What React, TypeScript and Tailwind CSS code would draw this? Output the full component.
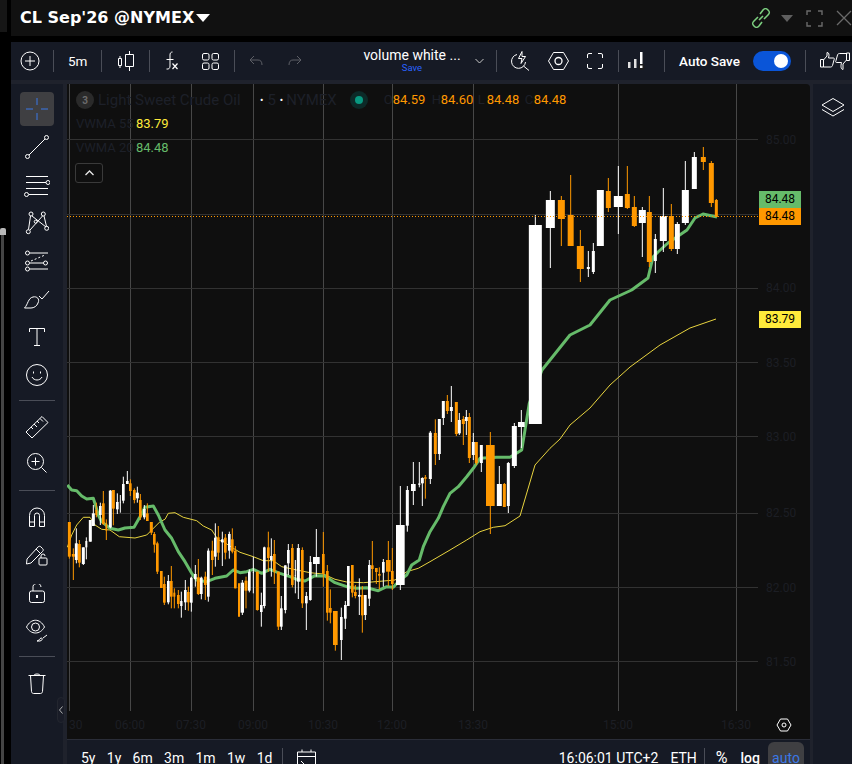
import React from "react";

const O = "#ff9800";
const W = "#ffffff";

// candle rows: x, wick top, wick bottom, body top, body bottom, white?, body width (all in crop units, 3x)
type Row = [number, number, number, number, number, number, number];

const crop1: Row[] = [
  [28,186,296,186,290,0,9],[40,265,360,282,290,0,9],[49,205,310,250,300,1,9],[58,240,322,252,308,0,9],[70,262,315,262,312,1,9],
  [79,232,298,243,262,1,6],[91,180,245,180,245,1,9],[100,135,198,160,198,1,9],[109,128,172,150,165,0,6],[121,128,195,138,165,1,8],
  [130,93,195,130,192,0,8],[139,178,240,190,212,0,5],[151,90,205,92,202,1,9],[160,90,196,90,146,0,9],[172,100,162,126,148,1,8],
  [181,105,158,125,128,1,3],[190,50,130,72,122,1,8],[202,33,72,63,72,1,8],[211,58,108,70,93,0,8],[223,85,130,90,120,0,8],
  [232,80,128,98,115,1,9],[241,102,180,120,172,0,8],[253,135,178,147,172,1,8],[262,130,183,160,183,0,8],[274,186,225,186,218,0,9],
  [283,216,278,222,254,0,8],[292,245,342,250,335,0,8],[304,333,384,333,384,0,8],[313,350,435,372,428,0,8],[325,345,433,363,427,1,8],
  [334,318,445,363,410,0,8],[343,385,445,398,410,0,6],[355,390,445,405,432,0,8],[364,395,473,423,438,1,7],[376,360,450,390,427,1,8],
  [385,380,452,396,427,0,8],[394,350,455,353,428,1,8],[406,315,380,342,357,1,8],[415,297,405,352,402,0,9],[424,350,418,353,402,1,8],
  [436,335,420,350,375,0,8],[445,265,425,272,410,1,8],[457,242,345,272,300,0,8],[466,190,320,233,290,1,8],[475,198,300,232,278,0,8],
  [487,215,318,238,247,1,8],[496,222,298,233,278,0,8],[508,215,296,222,272,1,8],[517,205,280,238,275,0,8],[526,258,385,272,385,0,8],
  [537,370,470,370,470,0,6],
];

const crop2: Row[] = [
  [7,360,465,368,458,1,10],[18,350,445,362,392,0,9],[28,328,397,335,392,1,8],[40,290,400,336,338,1,3],[52,335,452,335,450,0,9],
  [64,398,500,435,456,1,8],[73,260,445,262,438,1,8],[85,215,335,262,294,0,8],[94,235,350,288,300,1,8],[103,240,372,282,335,0,8],
  [115,335,510,335,500,0,9],[124,408,510,445,500,1,8],[136,316,460,316,450,1,8],[145,252,345,270,310,1,8],[157,252,382,264,375,0,8],
  [166,300,400,345,347,1,3],[175,252,417,264,365,1,9],[187,262,444,270,430,0,8],[199,396,510,408,430,1,8],[211,288,422,306,420,1,8],
  [229,207,350,291,312,1,20],[250,216,380,282,342,0,8],[262,315,482,333,458,0,8],[271,388,490,444,458,0,8],[286,453,572,453,555,0,14],
  [304,443,600,471,540,1,8],[316,423,507,435,476,1,8],[325,318,438,318,438,1,8],[337,315,412,315,398,0,8],[346,375,415,396,408,0,8],
  [358,355,465,405,410,1,8],[367,378,518,405,466,0,8],[376,405,480,405,465,1,8],[388,300,438,315,416,1,8],[397,243,360,316,327,0,8],
  [409,336,372,324,336,0,8],[418,322,388,342,347,0,8],[430,297,380,306,338,1,8],[445,243,378,300,335,0,14],[457,264,390,333,372,0,8],
  [481,78,390,195,375,1,26],
];

const crop3: Row[] = [
  [52,318,455,330,437,1,9],[70,246,375,312,333,1,14],[88,246,322,310,315,1,6],[97,292,378,294,310,1,9],[106,285,356,292,296,0,9],
  [121,153,312,158,297,1,9],[136,118,255,159,222,0,9],[148,117,240,117,222,1,9],[160,63,135,63,114,1,9],[172,45,102,63,93,0,9],
  [184,18,126,81,93,1,9],[199,66,168,66,162,0,9],[208,99,165,120,160,1,9],[220,108,195,117,132,0,9],[229,90,165,111,123,1,9],
  [238,99,249,111,234,0,9],[250,159,240,186,225,1,9],[259,186,255,186,249,0,9],[274,195,276,195,249,1,9],[301,156,462,195,378,0,26],
  [328,258,378,312,378,1,15],[343,309,381,312,381,0,9],[355,246,399,249,378,1,9],[373,129,264,138,258,1,15],[394,90,204,126,141,1,20],
];

const crop4: Row[] = [
  [46,225,852,255,852,1,39],[91,153,384,180,264,1,27],[124,168,318,180,237,0,21],[152,105,318,225,318,0,18],[181,270,426,318,387,0,21],
  [205,333,411,381,387,1,9],[220,309,402,333,396,1,9],[241,150,318,150,318,1,21],[265,114,216,153,204,0,15],[295,78,282,168,201,1,27],
  [322,78,207,162,204,0,15],[343,168,261,201,258,0,15],[367,201,351,210,249,1,21],[388,168,381,216,366,0,15],[406,282,399,297,363,1,9],
  [430,144,336,228,303,1,21],[454,192,333,228,327,0,15],[472,246,342,252,327,1,15],[496,63,255,150,249,1,21],[523,36,147,51,147,1,15],
  [550,21,90,51,66,0,15],[574,63,201,69,189,0,15],[589,177,231,180,231,0,9],
];

const sets: { ox: number; oy: number; rows: Row[] }[] = [
  { ox: 60, oy: 460, rows: crop1 },
  { ox: 240, oy: 460, rows: crop2 },
  { ox: 390, oy: 380, rows: crop3 },
  { ox: 520, oy: 140, rows: crop4 },
];

const greenLine =
  "67.3,485 71.7,490 76.7,490.7 81.7,496 86.7,499 93.3,498.3 96,506.7 98.3,515 101.7,521.7 110,528.3 118.3,530 125,528 134,527.3 140,516.7 145,507.3 153.3,506 158.3,515 165,530 171.7,538.3 178.3,551.7 185,561.7 191.7,573.3 196.7,580 206.7,581.7 215,578.3 226.7,576 233.3,570 240,572.7 246.7,571.7 253.3,569.3 261.7,573.3 270,569.3 280,573.3 290,576.7 296.7,579.3 305,581 315,575.7 325,576 335,582.7 346.7,586.7 356.7,588.3 366.7,587.7 378.3,590.7 386.7,586.7 393.3,587.3 400,580 406.7,575 411.7,565 419.3,560 423.3,546.7 430,531.7 438.3,518.3 443.3,506.7 450,493.3 458.3,486.7 466.7,476.7 473.3,468.3 480,458.3 496.7,457.3 510,457.3 521.7,450 525,430 529.3,403.3 542,370 570,335 590,325 610,300 631.7,290 648,278 653,257 658,252 668,243 687,230 695,218 703,214 717,217";

const yellowLine =
  "67.3,547.3 71.7,535 76.7,525 83.3,517.3 90,517.3 95,525 101.7,529.3 110,530 119.3,536.7 135,538 146.7,535 151.7,530 160,521.7 165,519.3 168.3,513.3 175,512.7 183.3,517.3 196.7,520.7 203.3,526 211.7,530 218.3,540 223.3,541.7 233.3,548.3 240,552.3 253.3,556.7 263.3,560.7 273.3,560.7 281.7,566.7 296.7,570 310,572.7 323.3,574 335,579.3 346.7,582 363.3,582.7 380,581.3 395,580 406.7,571.7 418.3,568.3 430,561.7 450,550 466.7,540 480,531.7 493.3,527.3 505,525.7 520,516 535,465 550,448.3 560,439 570,425 590,408 610,385 630,367 660,345 690,328 716,319";

const vLines = [69, 130, 191, 253, 323, 392, 473, 618, 736];
const hLines = [139, 214, 288, 362, 436, 513, 587, 661];
const priceLabels: [string, number][] = [["85.00", 144], ["84.00", 292], ["83.50", 367], ["83.00", 441], ["82.50", 517], ["82.00", 592], ["81.50", 666]];
const timeLabels: [string, number][] = [["06:00", 130], ["07:30", 191], ["09:00", 253], ["10:30", 323], ["12:00", 392], ["13:30", 473], ["15:00", 618], ["16:30", 736]];

const Chart = () => (
  <svg viewBox="67 84 743 655" className="absolute inset-0 w-full h-full">
    {vLines.map((x) => <line key={x} x1={x + 0.5} x2={x + 0.5} y1={84} y2={711} stroke="#474747" />)}
    {hLines.map((y) => <line key={y} x1={67} x2={758} y1={y + 0.5} y2={y + 0.5} stroke="#323232" />)}
    {priceLabels.map(([t, y]) => <text key={t} x={766} y={y} fontSize="12" fill="#1c1e24">{t}</text>)}
    <text x={69} y={729} fontSize="12" fill="#1c1e24">30</text>
    {timeLabels.map(([t, x]) => <text key={t} x={x} y={729} fontSize="12" textAnchor="middle" fill="#1c1e24">{t}</text>)}
    <polyline points={yellowLine} fill="none" stroke="#e8d43f" strokeWidth="1" />
    <polyline points={greenLine} fill="none" stroke="#66bb6a" strokeWidth="3" strokeLinejoin="round" />
    {sets.map((s) =>
      s.rows.map((r, i) => {
        const x = s.ox + r[0] / 3;
        const bw = r[6] / 3;
        const bottom = s.ox === 520 && i === 0 ? 424 : s.oy + r[4] / 3;
        const color = r[5] ? W : O;
        return (
          <g key={s.ox + "-" + i} fill={color}>
            <rect x={x - 0.5} width={1} y={s.oy + r[1] / 3} height={Math.max(0, (s.ox === 520 && i === 0 ? 424 : s.oy + r[2] / 3) - (s.oy + r[1] / 3))} />
            <rect x={x - bw / 2} width={bw} y={s.oy + r[3] / 3} height={Math.max(1, bottom - (s.oy + r[3] / 3))} />
          </g>
        );
      })
    )}
    <line x1={67} x2={758} y1={216.5} y2={216.5} stroke={O} strokeWidth="1" strokeDasharray="1 2" />
  </svg>
);

const Divider = ({ ml }: { ml: string }) => <div className={`w-px h-[22px] bg-[#4a4d57] shrink-0 ${ml}`} />;

const Stroke = ({ w, h, children, color = "#fff" }: { w: number; h: number; children: React.ReactNode; color?: string }) => (
  <svg width={w} height={h} viewBox={`0 0 ${w} ${h}`} fill="none" stroke={color} strokeWidth="1" className="shrink-0">
    {children}
  </svg>
);

const TopToolbar = () => (
  <div className="h-[38px] bg-[#161a25] flex items-center text-white shrink-0 overflow-hidden">
    <div className="ml-[9px]">
      <Stroke w={20} h={20}><circle cx="10" cy="10" r="9" /><path d="M10 5v10M5 10h10" /></Stroke>
    </div>
    <Divider ml="ml-[13px]" />
    <span className="ml-[14px] text-[13.5px] w-[19px]">5m</span>
    <Divider ml="ml-[14px]" />
    <div className="ml-[15px]">
      <Stroke w={18} h={20}>
        <path d="M1.5 7.5h3v7h-3zM3 5v2.5M3 14.500V17M8.500 3.500h8v12h-8zM12.500 0v3.500M12.500 15.500V20" />
      </Stroke>
    </div>
    <Divider ml="ml-[14px]" />
    <div className="ml-[13px]">
      <Stroke w={16} h={20}>
        <path d="M9.500 1C7.500 1 7 2.500 7 4v11c0 2-1 3.500-3.500 3M3.500 8.500h7" />
        <path d="M9.500 12.500l5 5.500M14.500 12.500l-5 5.500" strokeWidth="1.200" />
      </Stroke>
    </div>
    <div className="ml-[23px]">
      <Stroke w={17} h={17}>
        <rect x="0.500" y="0.500" width="6.500" height="6.500" rx="1.500" /><rect x="10" y="0.500" width="6.500" height="6.500" rx="1.500" />
        <rect x="0.500" y="10" width="6.500" height="6.500" rx="1.500" /><rect x="10" y="10" width="6.500" height="6.500" rx="1.500" />
      </Stroke>
    </div>
    <Divider ml="ml-[15px]" />
    <div className="ml-[14px]">
      <Stroke w={14} h={12} color="#5d5f66"><path d="M5 1L1 5l4 4M1 5h8c2.500 0 4 1.500 4 5" /></Stroke>
    </div>
    <div className="ml-[25px]">
      <Stroke w={14} h={12} color="#5d5f66"><path d="M9 1l4 4-4 4M13 5H5c-2.500 0-4 1.500-4 5" /></Stroke>
    </div>
    <div className="ml-[60px] w-[100px] flex flex-col items-center leading-none">
      <span className="text-[14px] leading-[14px] whitespace-nowrap mt-[-1px]">volume white ...</span>
      <span className="text-[9.500px] leading-[10px] text-[#2962ff] mt-[1px]">Save</span>
    </div>
    <div className="ml-[13px]">
      <Stroke w={9} h={6} color="#c8c8c8"><path d="M0.500 1l4 4 4-4" /></Stroke>
    </div>
    <Divider ml="ml-[12px]" />
    <div className="ml-[14px]">
      <Stroke w={19} h={20}>
        <path d="M6 3.500a7 7 0 1 0 8.500 7.500M12.500 15l5.500 4.500" />
        <path d="M11 0.500L7.500 7.500h3.500l-1 5 4.500-7H11z" />
      </Stroke>
    </div>
    <div className="ml-[18px]">
      <Stroke w={21} h={18}>
        <path d="M5.500 0.500h10L20.500 9l-5 8.500h-10L0.500 9z" /><circle cx="10.500" cy="9" r="3.500" strokeWidth="1.300" />
      </Stroke>
    </div>
    <div className="ml-[18px]">
      <Stroke w={16} h={16}>
        <path d="M0.500 5V2a1.500 1.500 0 0 1 1.500-1.500h3M11 0.500h3A1.500 1.500 0 0 1 15.500 2v3M15.500 11v3a1.500 1.500 0 0 1-1.500 1.500h-3M5 15.500H2A1.500 1.500 0 0 1 0.500 14v-3" />
      </Stroke>
    </div>
    <Divider ml="ml-[15px]" />
    <div className="ml-[9px]">
      <svg width="19" height="18" viewBox="0 0 19 18" className="shrink-0">
        <rect x="0" y="10" width="2.500" height="6" fill="#e0e0e0" /><rect x="6" y="7" width="2.500" height="9" fill="#e0e0e0" />
        <rect x="12" y="0" width="2.500" height="12" fill="#fff" /><circle cx="13.500" cy="15" r="3" fill="#1d1d1d" /><rect x="12" y="13.500" width="2.500" height="2.500" fill="#fff" />
      </svg>
    </div>
    <Divider ml="ml-[17px]" />
    <span className="ml-[14px] text-[13.500px] font-medium w-[62px] whitespace-nowrap">Auto Save</span>
    <div className="ml-[12px] w-[38px] h-[20px] rounded-full bg-[#0a55d8] flex items-center justify-end pr-[3px] shrink-0">
      <div className="w-[14px] h-[14px] rounded-full bg-white" />
    </div>
    <Divider ml="ml-[14px]" />
    <div className="ml-[14px] flex">
      <Stroke w={15} h={16}><path d="M0.500 7.500h3v7.500h-3zM3.500 8L7 4V0.500c2 0 2.500 2 1.500 5.500h5c1 0 1 1 .5 2l-1.500 5.500c-.3 1-1 1.500-2 1.500H3.500" /></Stroke>
      <Stroke w={15} h={19}><path d="M14.500 8.500h-3V1h3zM11.500 8L8 12v5.500c-2 0-2.500-3-1.500-7h-5c-1 0-1-1-.5-2L2.500 3C2.800 2 3.500 1.500 4.500 1.500h7" /></Stroke>
    </div>
  </div>
);

const Tool = ({ h = 38, children }: { h?: number; children: React.ReactNode }) => (
  <div className="flex items-center justify-center w-full shrink-0" style={{ height: h }}>{children}</div>
);

const ToolSep = ({ className }: { className: string }) => <div className={`w-[36px] h-px bg-[#4a4d57] shrink-0 ${className}`} />;

const LeftToolbar = () => (
  <div className="w-[52px] bg-[#161a25] flex flex-col items-center pt-[6px] shrink-0 relative">
    <Tool h={38}>
      <div className="w-[34px] h-[34px] rounded-[4px] bg-[#3f3f42] flex items-center justify-center">
        <Stroke w={24} h={24} color="#3b78e7"><path d="M12 1v7M12 16v7M1 12h7M16 12h7" /></Stroke>
      </div>
    </Tool>
    <Tool>
      <Stroke w={24} h={24}><circle cx="2.500" cy="21.500" r="2" /><circle cx="21.500" cy="2.500" r="2" /><path d="M4 20L20 4" /></Stroke>
    </Tool>
    <Tool>
      <Stroke w={26} h={24}>
        <path d="M2 3.500h22M2 9.500h20M2 15.500h22M5 21.500h19" />
        <circle cx="24" cy="9.500" r="2" /><circle cx="2.500" cy="21.500" r="2" />
      </Stroke>
    </Tool>
    <Tool>
      <Stroke w={24} h={24}>
        <circle cx="6" cy="3" r="2" /><circle cx="18.300" cy="3" r="2" /><circle cx="3.300" cy="20.700" r="2" /><circle cx="21.700" cy="17.300" r="2" /><circle cx="10.700" cy="10.700" r="1.500" />
        <path d="M5.500 5L3.500 18.500M7 5l14 11M17.500 5L5 19M19 5l2.500 10.500" />
      </Stroke>
    </Tool>
    <Tool>
      <Stroke w={24} h={22}>
        <circle cx="2.500" cy="3" r="2" /><circle cx="2.500" cy="13" r="2" /><circle cx="2.500" cy="19" r="2" /><circle cx="20.500" cy="13" r="2" />
        <path d="M5 3h18M5 19h18M5 13h13.500" />
        <path d="M6 11l14-6" strokeDasharray="2 2" />
      </Stroke>
    </Tool>
    <Tool>
      <Stroke w={26} h={19}>
        <path d="M0.500 18C4 14.500 4 8 9 7c4-1 7 2 5 6-1 3-4 5-7 5zM15 6l3 3 7-8" />
      </Stroke>
    </Tool>
    <Tool>
      <Stroke w={16} h={18}><path d="M0.500 4V0.500h15V4M8 0.500v17M5 17.500h6" /></Stroke>
    </Tool>
    <Tool>
      <Stroke w={22} h={22}>
        <circle cx="11" cy="11" r="10.500" /><path d="M6 13c2 4 8 4 10 0" /><path d="M7.500 7.500v2M14.500 7.500v2" />
      </Stroke>
    </Tool>
    <ToolSep className="mt-[6px] mb-[8px]" />
    <Tool h={36}>
      <Stroke w={24} h={24}>
        <path d="M1 17L17 1.500l6 6L7 23zM6 12l2 2M9 9l3 3M12 6l2 2M15 3.500l3 3" />
      </Stroke>
    </Tool>
    <Tool h={36}>
      <Stroke w={20} h={20}>
        <circle cx="8.500" cy="8.500" r="8" /><path d="M8.500 4.500v8M4.500 8.500h8M14.500 14.500l5 5" />
      </Stroke>
    </Tool>
    <ToolSep className="mt-[9px]" />
    <Tool h={50}>
      <Stroke w={16} h={21}>
        <path d="M0.500 20.500v-11a7.500 7.500 0 0 1 15 0v11h-5v-11a2.500 2.500 0 0 0-5 0v11zM0.500 16h5M10.500 16h5" />
      </Stroke>
    </Tool>
    <Tool h={28}>
      <Stroke w={22} h={21}>
        <path d="M1 14L12 2c1-1 2-1 3 0l1.500 1.500c1 1 1 2 0 3L5 18l-4.500 1zM10 4l4.500 4.500" />
        <rect x="13" y="13" width="8" height="7" rx="1" /><path d="M15 13v-2a2 2 0 0 1 4 0" />
      </Stroke>
    </Tool>
    <Tool h={48}>
      <Stroke w={16} h={19}>
        <rect x="0.500" y="7" width="15" height="11.500" rx="2" /><path d="M4 7V4a4 4 0 0 1 8-1" /><path d="M8 11v3" strokeWidth="2" />
      </Stroke>
    </Tool>
    <Tool h={26}>
      <Stroke w={22} h={24}>
        <path d="M0.500 9C5 0 14 0 18.500 9 14 17 5 17 0.500 9z" /><circle cx="9.500" cy="9" r="4" />
        <path d="M11 23c2 0 2-2 4-3 2 0 2 2-1 3zM17 20l4-3" />
      </Stroke>
    </Tool>
    <ToolSep className="mt-[13px]" />
    <Tool h={52}>
      <Stroke w={18} h={21}>
        <path d="M0.500 2.500h17M6 2.500c0-2 6-2 6 0M2.500 2.500l1 16c0 1 1 2 2 2h7c1 0 2-1 2-2l1-16" />
      </Stroke>
    </Tool>
    <div className="absolute left-[46px] top-[613px] w-[8px] h-[26px] rounded-[4px] bg-[#191c27] border border-[#23262f] flex items-center justify-center">
      <Stroke w={4} h={8} color="#b0b0b0"><path d="M3.500 0.500L0.500 4l3 3.500" /></Stroke>
    </div>
  </div>
);

const Legend = () => (
  <div className="absolute inset-0 text-[13px] [font-family:Roboto,sans-serif]">
    <div className="absolute left-[9px] top-[7px] flex items-center h-[18px] whitespace-nowrap">
      <span className="w-[18px] h-[18px] rounded-full bg-[#2a2a2a] text-[#6c6c6c] text-[10px] font-bold flex items-center justify-center">3</span>
      <span className="ml-[4px] text-[15px] text-[#1d2029] w-[160px]">Light Sweet Crude Oil</span>
      <span className="text-white text-[10px] ml-[2px]">•</span>
      <span className="ml-[4px] text-[15px] text-[#1d2029]">5</span>
      <span className="text-white text-[10px] ml-[4px]">•</span>
      <span className="ml-[3px] text-[15px] text-[#1d2029]">NYMEX</span>
      <span className="ml-[13px] w-[18px] h-[18px] rounded-full bg-[#0c2a28] flex items-center justify-center">
        <span className="w-[8px] h-[8px] rounded-full bg-[#089981]" />
      </span>
      <span className="ml-[16px] text-[#1d2029] w-[9px]">O</span>
      <span className="text-[#ff9800] w-[39px]">84.59</span>
      <span className="text-[#1d2029] w-[9px]">H</span>
      <span className="text-[#ff9800] w-[37px]">84.60</span>
      <span className="text-[#1d2029] w-[9px]">L</span>
      <span className="text-[#ff9800] w-[38px]">84.48</span>
      <span className="text-[#1d2029] w-[9px]">C</span>
      <span className="text-[#ff9800]">84.48</span>
    </div>
    <div className="absolute left-[9px] top-[30px] flex whitespace-nowrap">
      <span className="w-[60px] text-[#1d2029]">VWMA 55</span><span className="text-[#ffeb3b]">83.79</span>
    </div>
    <div className="absolute left-[9px] top-[54px] flex whitespace-nowrap">
      <span className="w-[60px] text-[#1d2029]">VWMA 20</span><span className="text-[#66bb6a]">84.48</span>
    </div>
    <div className="absolute left-[8px] top-[79px] w-[28px] h-[20px] rounded-[3px] border border-[#3a3a3a] flex items-center justify-center">
      <Stroke w={9} h={6} color="#e8e8e8"><path d="M0.500 5l4-4 4 4" strokeWidth="1.300" /></Stroke>
    </div>
    <div className="absolute left-[692px] top-[107px] w-[42px] text-black text-[12px] leading-[17px] text-center">
      <div className="bg-[#66bb6a] h-[17px]">84.48</div>
      <div className="bg-[#ff9800] h-[17px]">84.48</div>
    </div>
    <div className="absolute left-[692px] top-[227px] w-[42px] h-[17px] bg-[#ffeb3b] text-black text-[12px] leading-[17px] text-center">83.79</div>
    <div className="absolute left-[709px] top-[634px]">
      <Stroke w={16} h={14}><path d="M4.500 1h7L15 7l-3.500 6h-7L1 7z" /><circle cx="8" cy="7" r="2" /></Stroke>
    </div>
  </div>
);

const BottomBar = () => (
  <div className="h-[25px] bg-[#161a25] border-t border-[#2a2d38] flex text-white text-[14px] leading-[20px] [font-family:Roboto,sans-serif] overflow-hidden shrink-0">
    <div className="flex pt-[8px] ml-[14px] gap-[11.300px] whitespace-nowrap">
      <span>5y</span><span>1y</span><span>6m</span><span>3m</span><span>1m</span><span>1w</span><span>1d</span>
    </div>
    <div className="w-px h-[25px] bg-[#4a4d57] ml-[10px] mt-[8px] shrink-0" />
    <div className="ml-[14px] mt-[9px] shrink-0">
      <Stroke w={19} h={22}><path d="M5 3V0.500M14 3V0.500M0.500 3h18v18H0.500zM0.500 7.500h18M4 12l3 3-3 3" /></Stroke>
    </div>
    <div className="ml-auto flex pt-[8px] whitespace-nowrap">
      <span>16:06:01 UTC+2</span>
      <span className="ml-[12px]">ETH</span>
      <div className="w-px h-[25px] bg-[#4a4d57] ml-[7px]" />
      <span className="ml-[11px] text-[16px]">%</span>
      <span className="ml-[13px] font-medium">log</span>
    </div>
    <div className="ml-[8px] mr-[6px] w-[36px] mt-[2px] rounded-t-[6px] bg-[#3f3f42] text-[#3b78e7] text-center pt-[6px] shrink-0">auto</div>
  </div>
);

const App = () => {
  return (
    <div className="w-[852px] h-[764px] flex bg-black overflow-hidden [font-family:Roboto,sans-serif]">
      <div className="w-[11px] shrink-0 flex flex-col bg-black relative">
        <div className="h-[32px] w-[7px] bg-[#161616]" />
        <div className="mt-[196px] w-[6px] h-[7px] rounded-t-[2px] bg-[#b8b8b8]" />
        <div className="w-[3px] flex-1 bg-[#444] ml-[1px]" />
      </div>
      <div className="flex-1 flex flex-col min-w-0">
        <div className="h-[36px] bg-[#111111] flex items-center pl-[9px] shrink-0">
          <span className="[font-family:'DejaVu_Sans',sans-serif] font-bold text-[16px] text-white whitespace-nowrap">CL Sep&apos;26 @NYMEX</span>
          <div className="ml-[2px] w-0 h-0 border-l-[7px] border-r-[7px] border-t-[8px] border-l-transparent border-r-transparent border-t-white" />
          <div className="ml-auto flex items-center">
            <Stroke w={20} h={20} color="#7ccf7f">
              <path d="M8 12l4-4M7 9l-4 4c-2 2-2 3 0 5s3 2 5 0l3-4M13 11l4-4c2-2 2-3 0-5s-3-2-5 0L9 6" strokeWidth="1.600" />
            </Stroke>
            <div className="ml-[10px] w-0 h-0 border-l-[6px] border-r-[6px] border-t-[7px] border-l-transparent border-r-transparent border-t-[#5f5f5f]" />
            <div className="ml-[13px]">
              <Stroke w={17} h={17} color="#6a6a6a"><path d="M1 5V1h4M12 1h4v4M16 12v4h-4M5 16H1v-4" strokeWidth="1.400" /></Stroke>
            </div>
            <div className="ml-[13px]">
              <Stroke w={16} h={16} color="#6a6a6a"><path d="M1 1l14 14M15 1L1 15" strokeWidth="1.300" /></Stroke>
            </div>
          </div>
        </div>
        <div className="h-[6px] shrink-0" />
        <TopToolbar />
        <div className="flex-1 flex bg-[#1f222c] pt-[4px] min-h-0">
          <LeftToolbar />
          <div className="w-[4px] shrink-0" />
          <div className="flex-1 flex flex-col min-w-0">
            <div className="flex-1 relative bg-[#0f0f0f] rounded-tr-[4px] overflow-hidden">
              <Chart />
              <Legend />
            </div>
            <BottomBar />
          </div>
          <div className="w-[3px] shrink-0" />
          <div className="w-[39px] bg-[#161a25] shrink-0 flex justify-center pt-[14px]">
            <Stroke w={24} h={20}>
              <path d="M12 0.500L23 7l-11 6.500L1 7zM1 11.500L12 18l11-6.500" />
            </Stroke>
          </div>
        </div>
      </div>
    </div>
  );
};

export default App;
